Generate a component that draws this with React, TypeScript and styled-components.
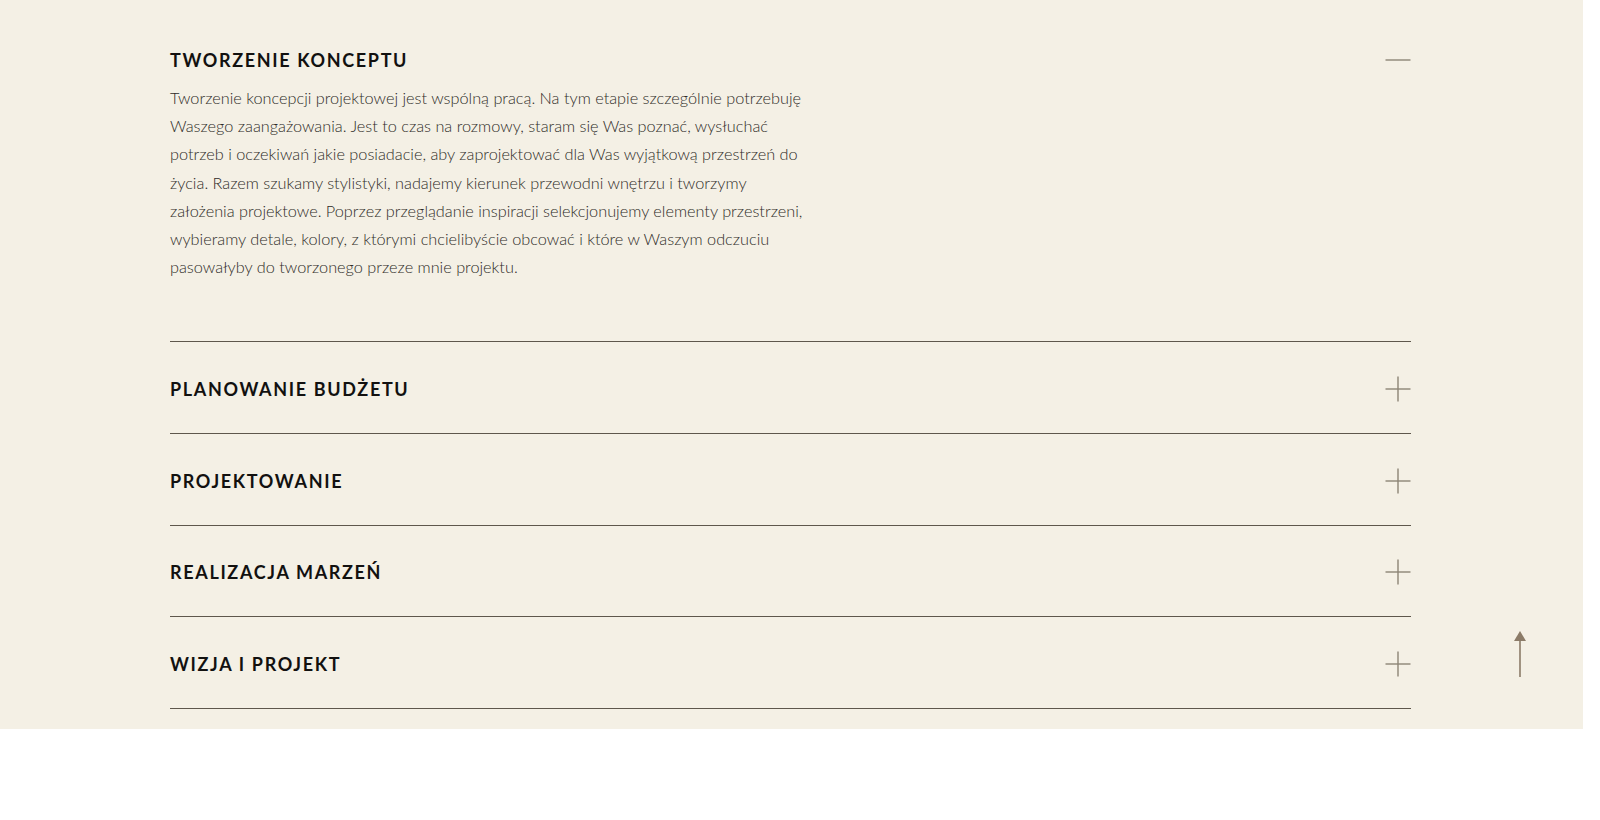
import styled, { createGlobalStyle } from 'styled-components'
import { useState } from 'react'

const GlobalStyle = createGlobalStyle`
  html, body {
    margin: 0;
    padding: 0;
    background: #ffffff;
  }
  body {
    font-family: Lato, "Open Sans", sans-serif;
    -webkit-font-smoothing: antialiased;
  }
`

const Section = styled.section`
  background: #f4f0e5;
  margin-right: 17px;
  padding: 35px 2px 20px 0;
`
const Inner = styled.div`
  max-width: 1241px;
  margin: 0 auto;
`
const Item = styled.div`
  border-bottom: 1px solid #5e574c;
`
const Header = styled.button<{ $open?: boolean }>`
  box-sizing: border-box;
  width: 100%;
  height: ${props => (props.$open ? '48px' : '90.6px')};
  display: flex;
  align-items: center;
  justify-content: space-between;
  background: transparent;
  border: none;
  outline: none;
  cursor: pointer;
  padding: ${props => (props.$open ? '2px 0 0' : '3px 0 0')};
  text-align: left;
`
const Title = styled.h4`
  margin: 0;
  font-family: Lato, sans-serif;
  font-weight: 700;
  font-size: 18px;
  line-height: 20px;
  letter-spacing: 1.65px;
  color: #121110;
  text-transform: uppercase;
`
const Body = styled.div`
  padding: 1px 0 60px;
`
const Line = styled.span`
  display: block;
  white-space: nowrap;
  font-family: Lato, sans-serif;
  font-weight: 300;
  font-size: 16.3px;
  line-height: 28.2px;
  color: #2f2c28;
`
const IconBox = styled.span`
  display: flex;
  width: 26px;
  height: 26px;
`
const ToTop = styled.a`
  position: fixed;
  right: 73px;
  top: 630px;
  display: block;
  width: 14px;
  height: 48px;
`

const items = [
  {
    title: 'Tworzenie konceptu',
    lines: [
      'Tworzenie koncepcji projektowej jest wspólną pracą. Na tym etapie szczególnie potrzebuję',
      'Waszego zaangażowania. Jest to czas na rozmowy, staram się Was poznać, wysłuchać',
      'potrzeb i oczekiwań jakie posiadacie, aby zaprojektować dla Was wyjątkową przestrzeń do',
      'życia. Razem szukamy stylistyki, nadajemy kierunek przewodni wnętrzu i tworzymy',
      'założenia projektowe. Poprzez przeglądanie inspiracji selekcjonujemy elementy przestrzeni,',
      'wybieramy detale, kolory, z którymi chcielibyście obcować i które w Waszym odczuciu',
      'pasowałyby do tworzonego przeze mnie projektu.'
    ]
  },
  { title: 'Planowanie budżetu', lines: [] },
  { title: 'Projektowanie', lines: [] },
  { title: 'Realizacja marzeń', lines: [] },
  { title: 'Wizja i projekt', lines: [] }
]

const ToggleIcon = ({ open }: { open: boolean }): JSX.Element => (
  <IconBox>
    <svg width="26" height="26" viewBox="0 0 26 26">
      <line x1="0.5" y1="13" x2="25.5" y2="13" stroke="#8c8476" strokeWidth="1.4" />
      {!open && <line x1="13" y1="0.5" x2="13" y2="25.5" stroke="#8c8476" strokeWidth="1.4" />}
    </svg>
  </IconBox>
)

const App = (): JSX.Element => {
  const [openIndex, setOpenIndex] = useState<number>(0)

  return (
    <>
      <GlobalStyle />
      <Section>
        <Inner>
          {items.map((item, i) => {
            const open = openIndex === i
            return (
              <Item key={item.title}>
                <Header $open={open} onClick={() => setOpenIndex(open ? -1 : i)}>
                  <Title>{item.title}</Title>
                  <ToggleIcon open={open} />
                </Header>
                {open && (
                  <Body>
                    {item.lines.map(line => (
                      <Line key={line}>{line}</Line>
                    ))}
                  </Body>
                )}
              </Item>
            )
          })}
        </Inner>
      </Section>
      <ToTop href="#">
        <svg width="14" height="48" viewBox="0 0 14 48">
          <polygon points="7,1 13,11 1,11" fill="#8b7b68" />
          <line x1="7" y1="10" x2="7" y2="47" stroke="#8b7b68" strokeWidth="1.6" />
        </svg>
      </ToTop>
    </>
  )
}

export default App
